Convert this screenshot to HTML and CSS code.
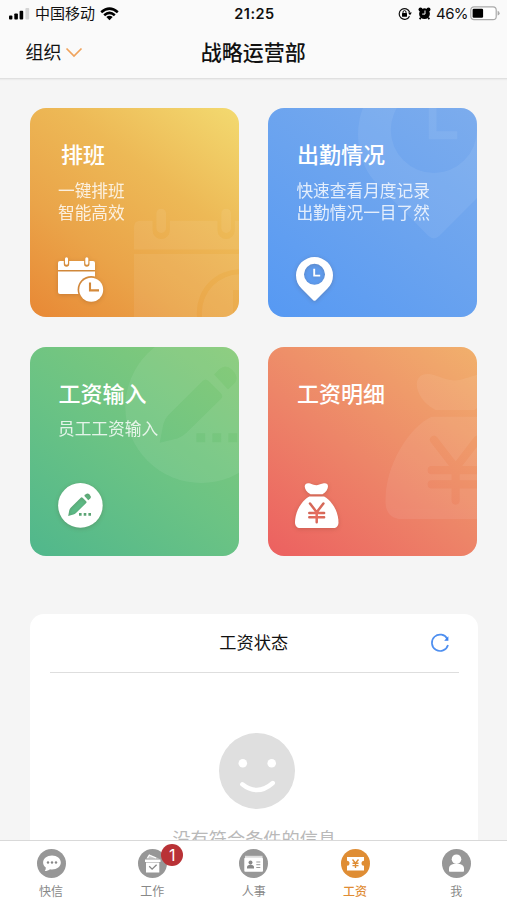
FILE: index.html
```html
<!DOCTYPE html>
<html lang="zh-CN">
<head>
<meta charset="utf-8">
<title>战略运营部</title>
<link rel="stylesheet" href="styles.css">
</head>
<body>
<svg class="defs" width="0" height="0" aria-hidden="true">
  <defs>
    <mask id="cal-cut" maskUnits="userSpaceOnUse" x="-2" y="-2" width="52" height="52">
      <rect x="-2" y="-2" width="52" height="52" fill="#fff"/>
      <path d="M8.5 2v5M28.8 2v5" stroke="#000" stroke-width="5.4" stroke-linecap="round"/>
      <circle cx="33.2" cy="32.7" r="13.6" fill="#000"/>
    </mask>
    <mask id="clock-cut" maskUnits="userSpaceOnUse" x="-2" y="-2" width="52" height="52">
      <rect x="-2" y="-2" width="52" height="52" fill="#fff"/>
      <path d="M32 25.6v7.8h9" fill="none" stroke="#000" stroke-width="2.1"/>
    </mask>
    <mask id="pin-cut" maskUnits="userSpaceOnUse" x="-2" y="-2" width="52" height="52">
      <rect x="-2" y="-2" width="52" height="52" fill="#fff"/>
      <circle cx="18.5" cy="17.3" r="10.5" fill="#000"/>
      <path d="M18.2 11.8v6.8h6" fill="none" stroke="#fff" stroke-width="1.9"/>
    </mask>
    <mask id="pen-cut" maskUnits="userSpaceOnUse" x="-2" y="-2" width="52" height="52">
      <rect x="-2" y="-2" width="52" height="52" fill="#fff"/>
      <path d="M10.2 32.9 11.3 27.3Q11.6 26 12.7 24.8L22.8 14.7Q23.7 13.8 24.6 14.7L28.2 18.3Q29 19.2 28.2 20L18 30Q16.8 31.2 15.4 31.6Z"/>
      <path d="M26.2 12.8 27.8 11.2Q29.6 9.6 31.5 11.4 33.6 13.5 32.4 15.2L30.3 17.2Z"/>
      <path d="M21 30.1h2.6v2.6H21zM25.7 30.1h2.6v2.6h-2.6zM30.4 30.1H33v2.6h-2.6z"/>
    </mask>
    <mask id="bag-cut" maskUnits="userSpaceOnUse" x="-2" y="-2" width="52" height="52">
      <rect x="-2" y="-2" width="52" height="52" fill="#fff"/>
      <path d="M15 20.5 21.7 29.2 28.4 20.5M21.7 29.2V39.3M14.3 29.9h14.8M14.3 34.3h14.8" fill="none" stroke="#000" stroke-width="2.5" stroke-linecap="round"/>
    </mask>
    <symbol id="calendar" viewBox="0 0 46 46">
      <g mask="url(#cal-cut)">
        <path d="M2 4h33q2 0 2 2v7H0V6q0-2 2-2z"/>
        <path d="M0 14.4h37V37H2q-2 0-2-2z"/>
      </g>
      <path d="M8.5 1.7v4.6M28.8 1.7v4.6" fill="none" stroke="currentColor" stroke-width="3" stroke-linecap="round"/>
      <circle cx="33.2" cy="32.7" r="12" mask="url(#clock-cut)"/>
    </symbol>
    <symbol id="pin" viewBox="0 0 38 46">
      <path mask="url(#pin-cut)" d="M18.5 0A18.5 18.5 0 0 1 37 18.3C37 24 35 28 31.5 31.4L19.8 43.2Q18.5 44.4 17.2 43.2L5.5 31.4C2 28 0 24 0 18.3A18.5 18.5 0 0 1 18.5 0Z"/>
    </symbol>
    <symbol id="pencil" viewBox="0 0 45 45">
      <circle cx="22.4" cy="22.4" r="22.3" mask="url(#pen-cut)"/>
    </symbol>
    <symbol id="bag" viewBox="0 0 44 46">
      <g mask="url(#bag-cut)">
        <path d="M15.5 11.3C11.5 9.2 9.7 5.8 9.7 3.2 10 .3 12.5-.3 15.2.6 18 1.5 19.5 2.2 21.4 2.2 23.4 2.2 25 1.4 27.8.6 30.5-.2 32.8.4 33 3.2 33 5.8 31.2 9.2 27.5 11.3Z"/>
        <path d="M14.3 13.4h14.8C36 16.6 43.5 28 43.5 39.5 43.5 43 41.4 45 38.5 45H5C2 45 0 43 0 39.5 0 28 7.4 16.6 14.3 13.4Z"/>
      </g>
    </symbol>
  </defs>
</svg>
<div class="screen">
  <header class="top">
    <div class="status">
      <div class="status-left">
        <svg width="21" height="12" viewBox="0 0 21 12"><rect x="0" y="7.5" width="3.4" height="4" rx=".9"/><rect x="5.3" y="5.4" width="3.6" height="6.1" rx=".9"/><rect x="10.6" y="2.8" width="3.6" height="8.7" rx=".9"/><rect x="16.4" y="0" width="3.8" height="11.5" rx=".9" fill="#d4d4d4"/></svg>
        <span class="carrier">中国移动</span>
        <svg class="wifi" width="19" height="14" viewBox="0 0 19 14"><g fill="none" stroke="#000" stroke-width="2.6"><path d="M1.2 5.2Q9.5-2 17.8 5.2"/><path d="M4.2 8.2Q9.5 3.6 14.8 8.2"/></g><path d="M6.3 10Q9.5 7.6 12.7 10L9.5 13.3Z"/></svg>
      </div>
      <div class="time">21:25</div>
      <div class="status-right">
        <svg width="14" height="14" viewBox="0 0 14 14"><path d="M11.7 5.2A5.4 5.4 0 1 0 11.5 9.2" fill="none" stroke="#111" stroke-width="1.2"/><path d="M10 5.5h3.8L12 8.2z"/><rect x="4" y="6" width="5" height="3.8" rx=".5"/><path d="M5 6.3V5.1a1.5 1.5 0 0 1 3 0v1.2" fill="none" stroke="#111"/></svg>
        <svg class="alarm" width="13" height="13" viewBox="0 0 13 13"><circle cx="6.5" cy="6.7" r="5.4"/><circle cx="2.5" cy="2.6" r="2"/><circle cx="10.5" cy="2.6" r="2"/><path d="M2.8 10.5 1.7 12.2M10.2 10.5l1.1 1.7" stroke="#000" stroke-width="1.7"/><path d="M7 3.5V7.1H4.2" fill="none" stroke="#fafafa" stroke-width="1"/></svg>
        <span class="percent">46%</span>
        <svg width="30" height="15" viewBox="0 0 30 15"><rect x=".8" y=".8" width="25.4" height="12.9" rx="3.2" fill="#fff" stroke="#aaa" stroke-width="1.2"/><rect x="2.6" y="2.7" width="10.5" height="9.1" rx="1.2"/><path d="M27.6 4.8q2 .8 2 2.4t-2 2.4z" fill="#aaa"/></svg>
      </div>
    </div>
    <nav class="nav">
      <div class="org">组织<svg width="18" height="11" viewBox="0 0 18 11"><path d="M1.5 1.5 9 9l7.5-7.5" fill="none" stroke="#f0a35c" stroke-width="1.7"/></svg></div>
      <h1>战略运营部</h1>
    </nav>
  </header>

  <main>
    <section class="cards">
      <article class="card schedule">
        <svg class="decor" viewBox="0 0 209 209"><use href="#calendar" x="104" y="100" width="147.2" height="147.2"/></svg>
        <h2>排班</h2>
        <p>一键排班<br>智能高效</p>
        <svg class="icon" width="46" height="46"><use href="#calendar"/></svg>
      </article>
      <article class="card attendance">
        <svg class="decor" viewBox="0 0 209 209"><use href="#pin" x="90" y="-49" width="155.8" height="188.6"/></svg>
        <h2>出勤情况</h2>
        <p>快速查看月度记录<br>出勤情况一目了然</p>
        <svg class="icon" width="38" height="46"><use href="#pin"/></svg>
      </article>
      <article class="card entry">
        <svg class="decor" viewBox="0 0 209 209"><use href="#pencil" x="95" y="-16" width="153" height="153"/></svg>
        <h2>工资输入</h2>
        <p>员工工资输入</p>
        <svg class="icon" width="45" height="45"><use href="#pencil"/></svg>
      </article>
      <article class="card detail">
        <svg class="decor" viewBox="0 0 209 209"><use href="#bag" x="117.3" y="26.3" width="142.6" height="149"/></svg>
        <h2>工资明细</h2>
        <svg class="icon" width="44" height="46"><use href="#bag"/></svg>
      </article>
    </section>

    <section class="panel">
      <div class="panel-head">
        <h3>工资状态</h3>
        <svg width="20" height="20" viewBox="0 0 20 20"><path d="M17.4 6A8.2 8.2 0 1 0 18 12" fill="none" stroke="#4e8ff0" stroke-width="1.7"/><path d="M18.4 3.2v4.6h-4.2z" fill="#3b82ee"/></svg>
      </div>
      <div class="empty">
        <svg width="76" height="76" viewBox="0 0 76 76"><circle cx="38" cy="38" r="38" fill="#dfdfdf"/><circle cx="23.8" cy="30.3" r="4.3" fill="#fff"/><circle cx="52.7" cy="30.3" r="4.3" fill="#fff"/><path d="M23.3 51.3Q38.4 63.5 53.8 50" fill="none" stroke="#fff" stroke-width="4.4" stroke-linecap="round"/></svg>
        <p>没有符合条件的信息</p>
      </div>
    </section>
  </main>

  <footer class="tabs">
    <div class="tab">
      <svg width="29" height="29" viewBox="0 0 29 29"><circle cx="14.5" cy="14.5" r="14.5" fill="#979797"/><path d="M15 6.4c5 0 8.8 3 8.8 7s-3.8 7-8.8 7q-1 0-2-.2c-1.3 1-3 1.8-5.2 1.8q1.2-1.5 1-3.4c-1.7-1.3-2.7-3.2-2.7-5.2 0-4 3.9-7 8.9-7z" fill="#fff"/><circle cx="11" cy="13.5" r="1.2" fill="#888"/><circle cx="15" cy="13.5" r="1.2" fill="#888"/><circle cx="19" cy="13.5" r="1.2" fill="#888"/></svg>
      <span>快信</span>
    </div>
    <div class="tab">
      <div class="badged">
        <svg width="29" height="29" viewBox="0 0 29 29"><circle cx="14.5" cy="14.5" r="14.5" fill="#979797"/><path d="M7 10.5h15.5V13H7zM8 13.6h13.3v10H8z" fill="#fff"/><path d="M8.2 9.7 11 5.3l10.5 4.4z" fill="#ccc"/><path d="M9.5 9 11.3 6.2 18 9" fill="none" stroke="#fff" stroke-width="1.2"/><path d="m11.2 17.3 2.9 2.9 4.5-4.5" fill="none" stroke="#888" stroke-width="1.3"/></svg>
        <b class="badge">1</b>
      </div>
      <span>工作</span>
    </div>
    <div class="tab">
      <svg width="29" height="29" viewBox="0 0 29 29"><circle cx="14.5" cy="14.5" r="14.5" fill="#979797"/><path d="M6 6.8h17.5V9H6z" fill="#ddd"/><rect x="5.3" y="8.7" width="18.7" height="14" rx="1" fill="#fff"/><circle cx="11.5" cy="13.5" r="2" fill="#888"/><path d="M8 19.5v-1.6q0-1.6 3.5-2.4 3.5.8 3.5 2.4v1.6z" fill="#888"/><path d="M17.3 13h4M17.3 15.7h4M17.3 18.5h4" stroke="#999" stroke-width="1"/></svg>
      <span>人事</span>
    </div>
    <div class="tab active">
      <svg width="29" height="29" viewBox="0 0 29 29"><circle cx="14.5" cy="14.5" r="14.5" fill="#df8d34"/><path d="M6 8h17v3.8a2.5 2.5 0 0 0 0 5V21.5H6V16.8a2.5 2.5 0 0 0 0-5z" fill="#fff"/><path d="m11.5 10.5 3 3.6 3-3.6M14.5 14v5M11.5 14.3h6M11.5 16.6h6" fill="none" stroke="#df8d34" stroke-width="1.4"/></svg>
      <span>工资</span>
    </div>
    <div class="tab">
      <svg width="29" height="29" viewBox="0 0 29 29"><circle cx="14.5" cy="14.5" r="14.5" fill="#979797"/><circle cx="14.5" cy="10.2" r="4.8" fill="#fff"/><path d="M7 22v-2.5c0-3 2.5-4.8 7.5-4.8s7.5 1.8 7.5 4.8V22q0 .8-.8.8H7.8Q7 22.8 7 22z" fill="#fff"/></svg>
      <span>我</span>
    </div>
  </footer>
</div>
</body>
</html>
```
FILE: styles.css
```css
* { box-sizing: border-box; }
body, h1, h2, h3, p { margin: 0; }
body {
  font-family: Inter, "Noto Sans CJK SC", sans-serif;
  background: #f5f5f5;
  color: #111;
}
svg { display: block; flex: none; }
.defs { position: absolute; }
.screen {
  width: 507px;
  height: 900px;
  display: flex;
  flex-direction: column;
  overflow: hidden;
}
.top {
  height: 79px;
  flex: none;
  background: #fafafa;
  border-bottom: 1px solid #e0e0e0;
  box-shadow: 0 1px 1px #ececec;
}
.status {
  height: 27px;
  display: grid;
  grid-template-columns: 1fr auto 1fr;
  align-items: center;
  padding: 0 7px 0 9px;
  font-size: 15px;
  line-height: 20px;
}
.status-left, .status-right { display: flex; align-items: center; }
.status-right { justify-content: flex-end; }
.carrier { margin-left: 5px; font-size: 15px; }
.wifi { margin-left: 5px; }
.time { font-weight: 600; font-size: 14.5px; letter-spacing: .5px; }
.alarm { margin-left: 6px; }
.percent { margin: 0 2px 0 5px; font-size: 15px; letter-spacing: -.6px; }
.nav {
  height: 51px;
  display: grid;
  grid-template-columns: 1fr auto 1fr;
  align-items: center;
  padding: 0 26px 0 25.5px;
}
.org { display: flex; align-items: center; gap: 3px; font-size: 18px; line-height: 26px; padding-top: 1px; }
.org svg { margin-top: -1px; }
h1 { font-size: 21px; line-height: 30px; font-weight: 500; }
main {
  flex: 1;
  min-height: 0;
  overflow: hidden;
  padding: 29.4px 29.5px 0 30px;
}
.cards {
  display: grid;
  grid-template-columns: 209px 209px;
  grid-auto-rows: 209px;
  gap: 29.4px;
}
.card {
  position: relative;
  overflow: hidden;
  border-radius: 16px;
  padding: 32px 28px 14px;
  display: flex;
  flex-direction: column;
  color: #fff;
}
.schedule { background: linear-gradient(37deg, #e88835 0%, #eaa449 32%, #edb956 64%, #f3da70 100%); }
.attendance { background: linear-gradient(37deg, #5699f3 0%, #6aa3ef 50%, #7caced 100%); }
.entry { background: linear-gradient(37deg, #50b78c 0%, #6bc384 48%, #87cb78 100%); }
.detail { background: linear-gradient(37deg, #ec6060 0%, #ed8568 46%, #f1b06c 100%); }
.decor {
  position: absolute;
  inset: 0;
  width: 209px;
  height: 209px;
  fill: #fff;
  color: #fff;
  opacity: .07;
}
h2 { position: relative; font-size: 22px; line-height: 31px; font-weight: 500; padding-left: .5px; }
.schedule h2 { padding-left: 3px; }
.card p { position: relative; margin-top: 8.5px; font-size: 16.7px; line-height: 22px; opacity: .82; white-space: nowrap; }
.icon {
  position: relative;
  margin-top: auto;
  fill: #fff;
  color: #fff;
  overflow: visible;
  filter: drop-shadow(0 1px 2px rgba(80, 40, 20, .22));
}
.entry .icon, .detail .icon { margin-bottom: 13.5px; }
.detail .icon { margin-bottom: 12.5px; margin-left: -1px; }
.panel {
  margin-top: 58.1px;
  height: 300px;
  padding: 0 19px 0 20px;
  border-radius: 14px 14px 0 0;
  background: #fff;
}
.panel-head {
  height: 59px;
  border-bottom: 1px solid #dedede;
  display: grid;
  grid-template-columns: 1fr auto 1fr;
  align-items: center;
  padding-right: 9px;
}
.panel-head svg { grid-column: 3; justify-self: end; }
h3 { grid-column: 2; font-size: 17.2px; line-height: 26px; font-weight: 400; padding-left: 8px; }
.empty { padding-top: 60px; display: flex; flex-direction: column; align-items: center; }
.empty svg { margin-left: 5px; }
.empty p { margin-top: 16px; font-size: 18.2px; line-height: 28px; color: #b9b9b9; }
.tabs {
  height: 60px;
  flex: none;
  display: grid;
  grid-template-columns: repeat(5, 1fr);
  padding-left: .4px;
  border-top: 1px solid #d9d9d9;
  background: #fff;
}
.tab {
  display: flex;
  flex-direction: column;
  align-items: center;
  padding-top: 8px;
  gap: 5px;
  font-size: 12px;
  line-height: 18px;
  color: #888;
}
.active { color: #df8d34; font-weight: 500; }
.badged { position: relative; }
.badge {
  position: absolute;
  left: 23.5px;
  top: -5px;
  width: 22px;
  height: 22px;
  border-radius: 50%;
  background: #b93236;
  color: #fff;
  font-size: 16px;
  font-weight: 400;
  line-height: 22px;
  text-align: center;
}
```
